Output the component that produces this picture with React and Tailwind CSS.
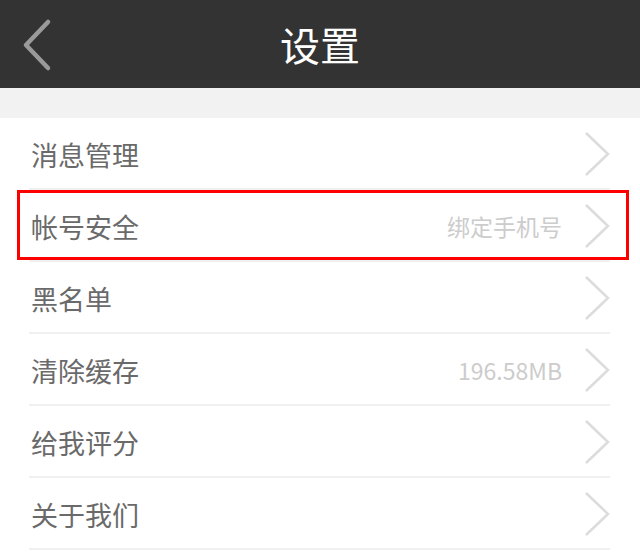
import React from 'react';

const rows = [
  { label: '消息管理' },
  { label: '帐号安全', value: '绑定手机号', highlight: true },
  { label: '黑名单' },
  { label: '清除缓存', value: '196.58MB' },
  { label: '给我评分' },
  { label: '关于我们' },
];

const Chevron = () => (
  <svg width="26" height="46" viewBox="0 0 26 46" className="shrink-0">
    <path d="M2 2 L24 23 L2 44" fill="none" stroke="#dcdcdc" strokeWidth="2.5" />
  </svg>
);

const Row = ({ label, value, highlight }) => (
  <div className="relative h-[72px] flex items-center pl-[31px] pr-[30px]">
    <span className="text-[27px] text-[#6a6a6a] leading-none">{label}</span>
    <div className="flex-1" />
    {value && <span className="text-[23px] text-[#cccccc] leading-none mr-[22px]">{value}</span>}
    <Chevron />
    <div className="absolute left-[29px] right-[30px] bottom-0 h-[2px] bg-[#f0f0f0]" />
    {highlight && (
      <div className="absolute left-[17px] right-[11px] top-[0px] bottom-[2px] border-[3px] border-[#ff0000] pointer-events-none" />
    )}
  </div>
);

export default function App() {
  return (
    <div className="w-[640px] h-[552px] bg-white overflow-hidden font-['Noto_Sans_CJK_SC','Noto_Sans',sans-serif]">
      <div className="h-[88px] bg-[#333333] flex items-center justify-center relative">
        <svg width="40" height="56" viewBox="0 0 40 56" className="absolute left-[18px] top-[17px]">
          <path d="M30 5 L8 28 L30 51" fill="none" stroke="#9a9a9a" strokeWidth="4.5" strokeLinecap="round" strokeLinejoin="round" />
        </svg>
        <span className="text-white text-[40px] leading-none">设置</span>
      </div>
      <div className="h-[30px] bg-[#f2f2f2]" />
      {rows.map((r) => (
        <Row key={r.label} {...r} />
      ))}
    </div>
  );
}
